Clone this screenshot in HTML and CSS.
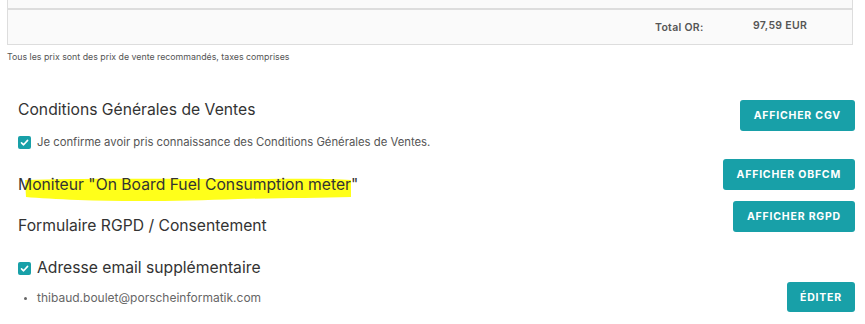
FILE: index.html
```html
<!DOCTYPE html>
<html lang="fr">
<head>
<meta charset="utf-8">
<link rel="stylesheet" href="styles.css">
</head>
<body>
<div class="table">
  <div class="row row-prev"></div>
  <div class="row row-total">
    <span class="total-label">Total OR:</span>
    <span class="total-value">97,59 EUR</span>
  </div>
</div>
<p class="note">Tous les prix sont des prix de vente recommandés, taxes comprises</p>

<div class="content">
  <div class="section sec-cgv">
    <div class="sec-left">
      <h3 class="title">Conditions Générales de Ventes</h3>
      <label class="check small">
        <span class="box"><svg viewBox="0 0 13 13" width="13" height="13"><path d="M3.5 6.8 L5.6 8.8 L9.6 4.4" fill="none" stroke="#fff" stroke-width="1.6" stroke-linecap="round" stroke-linejoin="round"/></svg></span>
        <span>Je confirme avoir pris connaissance des Conditions Générales de Ventes.</span>
      </label>
    </div>
    <button class="btn btn-cgv">AFFICHER CGV</button>
  </div>

  <div class="section sec-obfcm">
    <h3 class="title hl-wrap">
      <svg class="hl" viewBox="0 0 340 28" width="340" height="28" preserveAspectRatio="none"><path d="M7 5 C60 3 150 4 220 4 C270 4 310 3 333 5 L333 22 C300 23 260 23 220 24 C170 26 110 27 60 25 C40 24 20 23 8 22 Z" fill="#ffff1a"/></svg>
      <span class="hl-text">Moniteur "On Board Fuel Consumption meter"</span>
    </h3>
    <button class="btn btn-obfcm">AFFICHER OBFCM</button>
  </div>

  <div class="section sec-rgpd">
    <h3 class="title">Formulaire RGPD / Consentement</h3>
    <button class="btn btn-rgpd">AFFICHER RGPD</button>
  </div>

  <label class="check big">
    <span class="box"><svg viewBox="0 0 13 13" width="13" height="13"><path d="M3.5 6.8 L5.6 8.8 L9.6 4.4" fill="none" stroke="#fff" stroke-width="1.6" stroke-linecap="round" stroke-linejoin="round"/></svg></span>
    <span>Adresse email supplémentaire</span>
  </label>

  <div class="section sec-email">
    <ul class="emails"><li>thibaud.boulet@porscheinformatik.com</li></ul>
    <button class="btn btn-edit">ÉDITER</button>
  </div>
</div>
</body>
</html>
```

FILE: styles.css
```css
html, body {
  margin: 0;
  padding: 0;
  background: #fff;
}
body {
  font-family: "Inter", "Open Sans", sans-serif;
  color: #333;
  padding: 0 12px 0 7px;
}
.table {
  border: 1px solid #ddd;
  border-top: none;
  background: #fafafa;
}
.row-prev {
  height: 8px;
  border-bottom: 2px solid #ddd;
}
.row-total {
  height: 34px;
  display: flex;
  align-items: center;
  font-size: 10.5px;
  font-weight: 600;
  letter-spacing: 0.3px;
  color: #555;
}
.total-label {
  margin-left: 647px;
  width: 98px;
}
.total-value {
  margin-top: -4px;
}
.note {
  margin: 6px 0 0;
  font-size: 8.8px;
  color: #555;
  line-height: 12px;
}
.content {
  padding: 0 0 0 11px;
  margin-right: -2px;
}
.section {
  display: flex;
  justify-content: space-between;
  align-items: flex-start;
}
.title {
  margin: 0;
  font-size: 15.7px;
  font-weight: 400;
  line-height: 20px;
  color: #333;
}
.btn {
  border: none;
  border-radius: 3px;
  background: #18a0a8;
  color: #fff;
  font-family: inherit;
  font-size: 10.5px;
  font-weight: 700;
  letter-spacing: 0.8px;
  height: 31px;
  padding: 0 14px;
  cursor: pointer;
}
.sec-cgv {
  margin-top: 33px;
}
.sec-cgv .title {
  margin-top: 4px;
}
.btn-cgv {
  margin-top: 4px;
}
.check {
  display: flex;
  align-items: center;
  gap: 6px;
}
.box {
  width: 13px;
  height: 13px;
  border-radius: 2px;
  background: #18a0a8;
  display: block;
  flex: none;
}
.box svg { display: block; }
.check.small {
  margin-top: 16px;
  font-size: 11.3px;
  line-height: 13px;
  color: #555;
}
.sec-obfcm {
  margin-top: 10px;
}
.sec-obfcm .title {
  margin-top: 16px;
}
.hl-wrap {
  position: relative;
}
.hl {
  position: absolute;
  left: 0;
  top: 0;
  z-index: 0;
}
.hl-text {
  position: relative;
}
.sec-rgpd {
  margin-top: 6px;
}
.sec-rgpd .title {
  margin-top: 15px;
}
.check.big {
  margin-top: 22px;
  font-size: 15.7px;
  line-height: 20px;
  color: #333;
}
.sec-email {
  margin-top: 4px;
}
.emails {
  margin: 8px 0 0;
  padding: 0 0 0 19px;
  font-size: 12px;
  line-height: 16px;
  color: #666;
}
.emails li::marker {
  font-size: 9px;
}
.btn-edit {
  height: 30px;
  padding: 0 13px;
}
```
